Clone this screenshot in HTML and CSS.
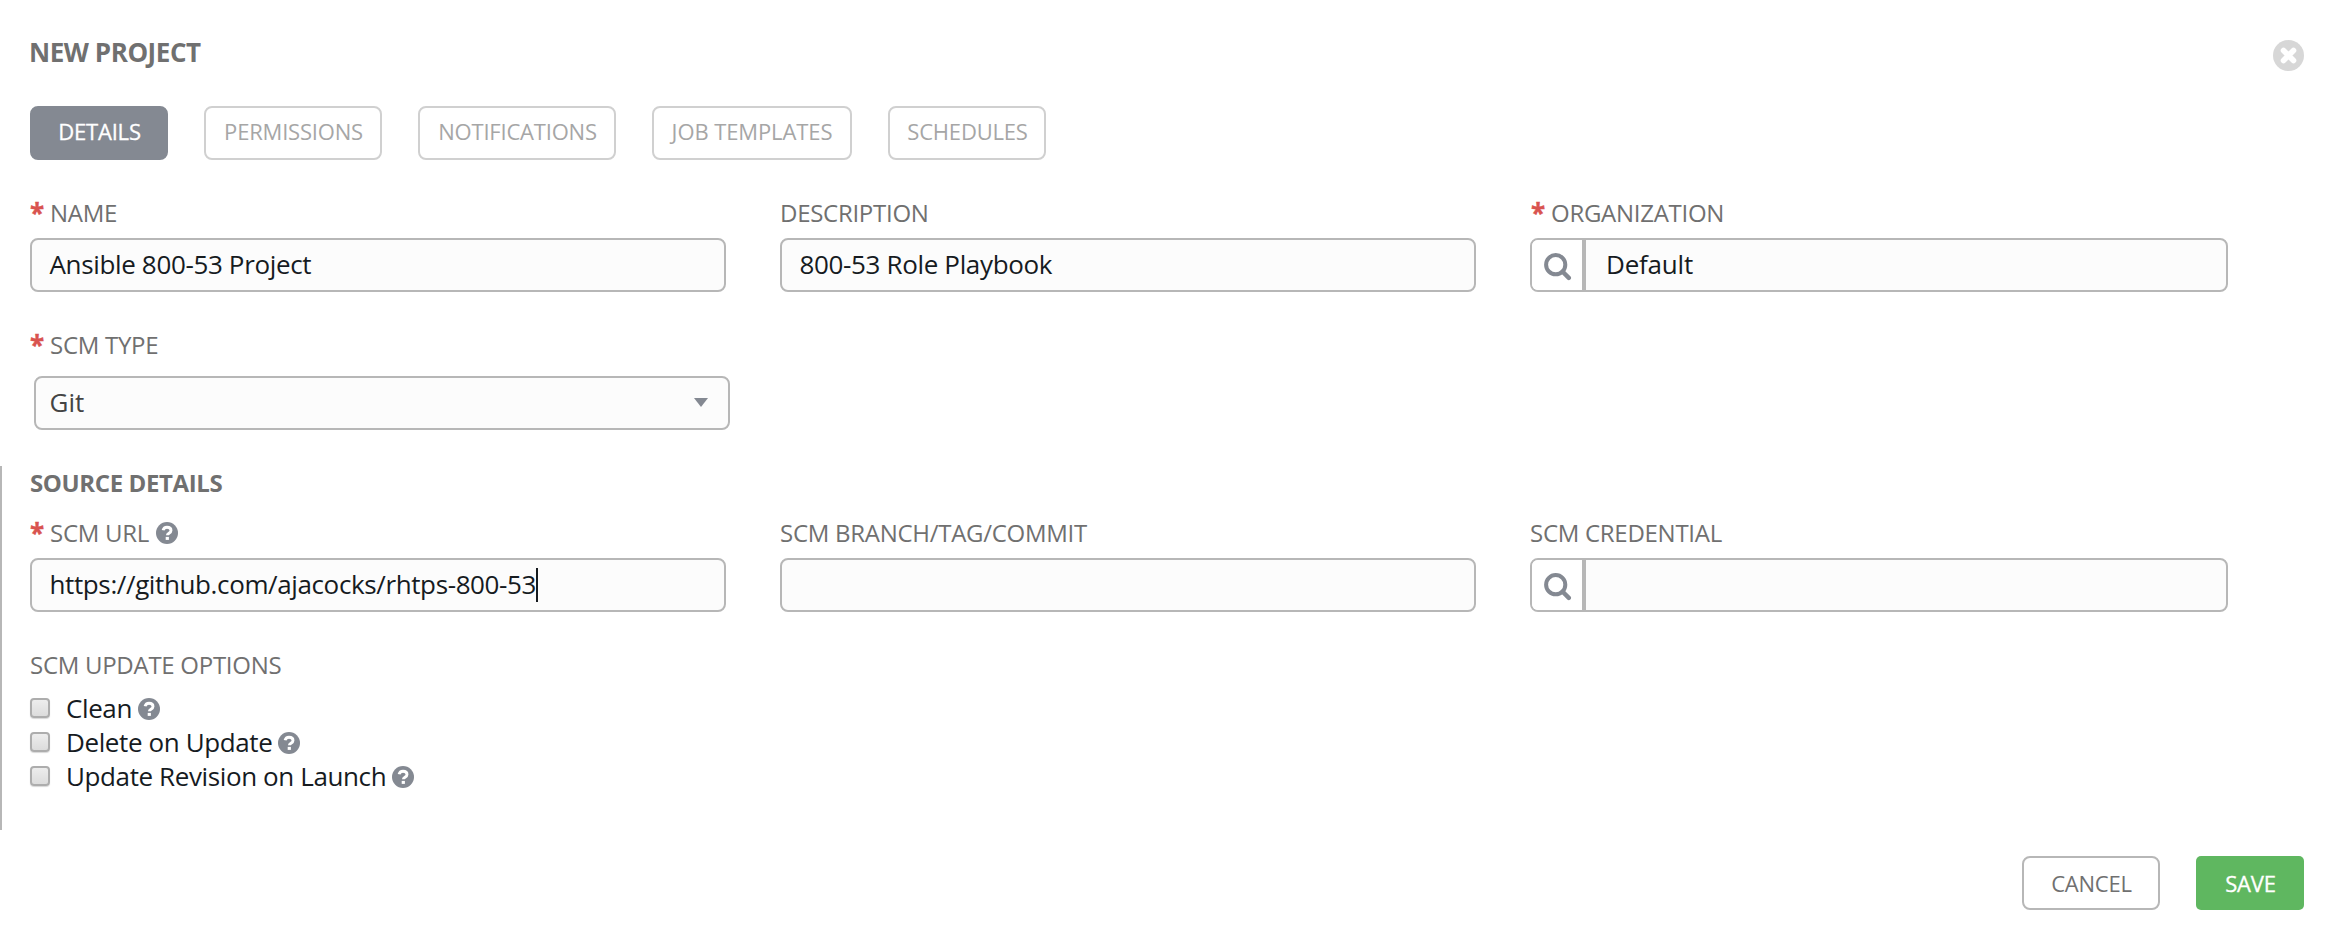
FILE: index.html
```html
<!DOCTYPE html>
<html lang="en">
<head>
<meta charset="utf-8">
<title>New Project</title>
<link rel="stylesheet" href="styles.css">
</head>
<body>
<svg class="defs" width="0" height="0" aria-hidden="true">
  <symbol id="help" viewBox="0 0 22 22">
    <circle cx="11" cy="11" r="11" fill="#848992"/>
    <path d="M7.1 8.3C7.6 6.1 9 5.2 11 5.2c2.300 0 4 1.300 4 3.200 0 2.900-3.600 2.700-3.600 4.800" fill="none" stroke="#fff" stroke-width="2.900"/>
    <rect x="9.700" y="14.900" width="3.200" height="3" fill="#fff"/>
  </symbol>
  <symbol id="search" viewBox="0 0 28 28">
    <circle cx="11.700" cy="11.700" r="9.600" fill="none" stroke="#848992" stroke-width="4"/>
    <path d="M18.700 18.700l6.100 6.200" stroke="#848992" stroke-width="4.400" stroke-linecap="round"/>
  </symbol>
</svg>
<main class="panel">
  <header class="head">
    <h1 class="title">NEW PROJECT</h1>
    <button class="close" aria-label="Close"><svg viewBox="0 0 31 31"><circle cx="15.500" cy="15.500" r="15.500" fill="#d7d7d7"/><path d="M10.500 10.500l10 10M20.500 10.500l-10 10" stroke="#fff" stroke-width="5.600" stroke-linecap="round"/></svg></button>
  </header>
  <nav class="tabs">
    <button class="tab tab-active"><span>DETAILS</span></button>
    <button class="tab tab-perm"><span>PERMISSIONS</span></button>
    <button class="tab tab-notif"><span>NOTIFICATIONS</span></button>
    <button class="tab tab-jobs"><span>JOB TEMPLATES</span></button>
    <button class="tab tab-sched"><span>SCHEDULES</span></button>
  </nav>
  <div class="row">
    <div class="field"><div class="label"><b class="req">*</b><span>NAME</span></div><div class="input"><span>Ansible 800-53 Project</span></div></div>
    <div class="field"><div class="label"><span>DESCRIPTION</span></div><div class="input"><span>800-53 Role Playbook</span></div></div>
    <div class="field field-wide"><div class="label label-inset"><b class="req">*</b><span>ORGANIZATION</span></div><div class="lookup"><div class="lookup-btn"><svg class="search"><use href="#search"/></svg></div><div class="lookup-value"><span>Default</span></div></div></div>
  </div>
  <div class="type">
    <div class="label"><b class="req">*</b><span>SCM TYPE</span></div>
    <div class="input select"><span>Git</span><i class="arrow"></i></div>
  </div>
  <section class="source">
    <h2 class="subtitle"><span>SOURCE DETAILS</span></h2>
    <div class="row">
      <div class="field"><div class="label"><b class="req">*</b><span>SCM URL</span><svg class="help"><use href="#help"/></svg></div><div class="input url"><span>https://github.com/ajacocks/rhtps-800-53</span><i class="caret"></i></div></div>
      <div class="field"><div class="label"><span>SCM BRANCH/TAG/COMMIT</span></div><div class="input"></div></div>
      <div class="field field-wide"><div class="label"><span>SCM CREDENTIAL</span></div><div class="lookup"><div class="lookup-btn"><svg class="search"><use href="#search"/></svg></div><div class="lookup-value"></div></div></div>
    </div>
    <div class="options">
      <div class="label"><span>SCM UPDATE OPTIONS</span></div>
      <div class="option"><i class="box"></i><span>Clean</span><svg class="help"><use href="#help"/></svg></div>
      <div class="option"><i class="box"></i><span>Delete on Update</span><svg class="help"><use href="#help"/></svg></div>
      <div class="option"><i class="box"></i><span>Update Revision on Launch</span><svg class="help"><use href="#help"/></svg></div>
    </div>
  </section>
  <footer class="actions">
    <button class="btn cancel"><span>CANCEL</span></button>
    <button class="btn save"><span>SAVE</span></button>
  </footer>
</main>
</body>
</html>
```
FILE: styles.css
```css
* { box-sizing: border-box; }
body { margin: 0; background: #fff; color: #161b1f; font: 26px "Open Sans", sans-serif; }
button { font: inherit; padding: 0; margin: 0; background: none; border: 0; }
.defs { display: block; height: 0; }
.panel { width: 2336px; height: 942px; overflow: hidden; display: flex; flex-direction: column; }
.head { display: flex; justify-content: space-between; padding: 34px 32px 0 29px; height: 106px; }
.title { margin: 0; font-size: 26px; font-weight: 700; line-height: 36px; letter-spacing: -0.45px; color: #707070; }
.close { width: 31px; height: 31px; margin-top: 6px; }
.close svg { display: block; width: 31px; height: 31px; }
.tabs { display: flex; gap: 36px; padding-left: 30px; height: 54px; }
.tab { border: 2px solid #d0d0d0; border-radius: 8px; color: #a6a6a6; font-size: 22px; line-height: 47px; letter-spacing: -0.2px; padding: 0 0 3px 1px; }
.tab-active { width: 138px; background: #848992; border-color: #848992; color: #fff; -webkit-text-stroke: 0.3px #fff; }
.tab-perm { width: 178px; }
.tab-notif { width: 198px; }
.tab-jobs { width: 200px; letter-spacing: -0.1px; padding-left: 0; }
.tab-sched { width: 158px; }
.row { display: flex; gap: 54px; padding: 36px 0 0 30px; }
.field { width: 696px; }
.field-wide { width: 698px; }
.label { display: flex; height: 34px; margin-bottom: 8px; font-size: 24px; line-height: 34px; letter-spacing: -0.28px; color: #707070; }
.label-inset { padding-left: 1px; }
.req { width: 20px; font-size: 26px; color: #d9534f; -webkit-text-stroke: 0.4px #d9534f; }
.input { display: flex; height: 54px; border: 2px solid #b7b7b7; border-radius: 8px; background: #fcfcfc; padding-left: 17.5px; line-height: 48px; letter-spacing: -0.35px; }
.url { letter-spacing: -0.38px; }
.lookup { display: flex; height: 54px; border: 2px solid #b7b7b7; border-radius: 8px; background: #fcfcfc; line-height: 48px; overflow: hidden; }
.lookup-btn { width: 54px; border-right: 4px solid #b7b7b7; background: #fff; padding: 13px 0 0 12px; }
.search { display: block; width: 28px; height: 28px; }
.lookup-value { padding-left: 20px; letter-spacing: -0.2px; }
.type { padding: 36px 0 0 30px; }
.type .label { margin-bottom: 14px; }
.select { width: 696px; margin-left: 4px; padding: 0 20px 0 13.5px; justify-content: space-between; letter-spacing: 0; color: #444; }
.arrow { width: 14px; height: 9px; margin-top: 20px; background: #848992; clip-path: polygon(0 0, 100% 0, 50% 100%); }
.source { margin-top: 36px; height: 364px; border-left: 2px solid #b7b7b7; }
.subtitle { margin: 0; padding-left: 28px; font-size: 24px; line-height: 34px; letter-spacing: -0.38px; color: #707070; font-weight: 700; }
.source .row { padding: 16px 0 0 28px; }
.help { width: 22px; height: 22px; margin: 6px 0 0 7px; }
.caret { width: 2px; height: 34px; margin-top: 8px; background: #161b1f; }
.options { padding: 36px 0 0 28px; }
.options .label { margin-bottom: 9px; }
.option { display: flex; height: 34px; line-height: 34px; letter-spacing: -0.39px; }
.option .help { margin: 7px 0 0 6px; }
.box { width: 20px; height: 20px; margin: 7px 16px 0 0; border: 2px solid #adadad; border-radius: 4px; background: linear-gradient(#ededed, #dcdcdc); box-shadow: 0 1px 1px #d8d8d8; }
.actions { display: flex; justify-content: flex-end; gap: 36px; padding: 26px 32px 0 0; }
.btn { height: 54px; border-radius: 8px; font-size: 22px; line-height: 50px; letter-spacing: -0.2px; padding-left: 1px; }
.cancel { width: 138px; border: 2px solid #b7b7b7; color: #707070; }
.save { width: 108px; border-radius: 5px; background: #5fb760; color: #fff; line-height: 54px; -webkit-text-stroke: 0.3px #fff; }
```
